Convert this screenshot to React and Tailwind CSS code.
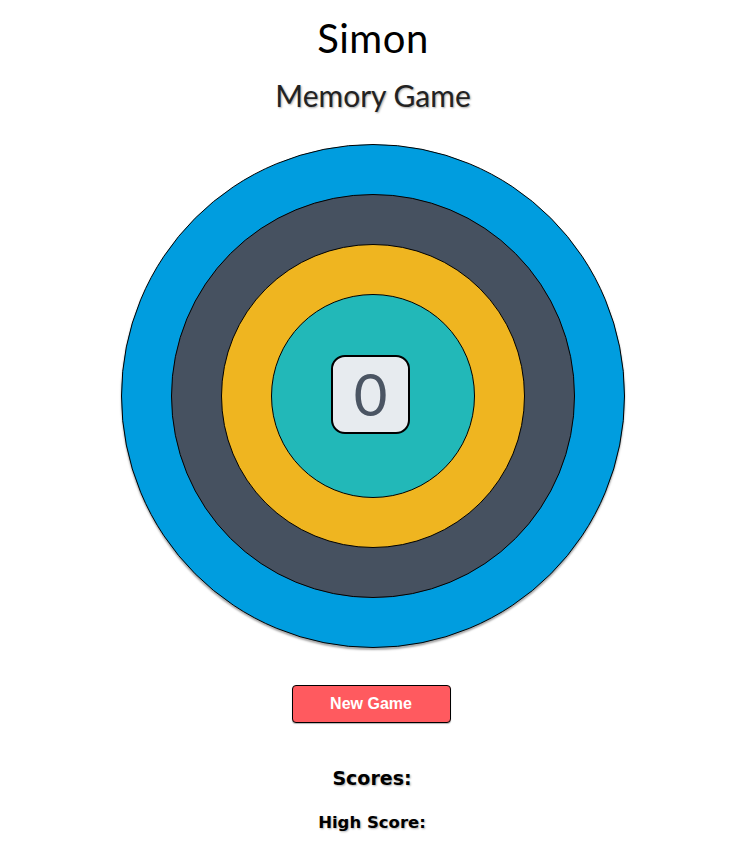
export default function App() {
  return (
    <div className="flex flex-col items-center bg-white min-h-screen pl-[9px] font-['Lato',sans-serif] text-black">
      <h1 className="mt-[14px] text-[40px] leading-[48px] font-normal tracking-[0.5px]">Simon</h1>
      <h2 className="mt-[15px] text-[30px] leading-[36px] text-[#222] [text-shadow:1px_1px_2px_rgba(0,0,0,0.35)]">Memory Game</h2>

      <div className="mt-[31px] w-[504px] h-[504px] rounded-full bg-[#009ddf] border-[1.5px] border-black shadow-[0_2px_2px_rgba(0,0,0,0.35)] flex items-center justify-center">
        <div className="w-[404px] h-[404px] rounded-full bg-[#465160] border-[1.5px] border-black flex items-center justify-center">
          <div className="w-[304px] h-[304px] rounded-full bg-[#efb520] border-[1.5px] border-black flex items-center justify-center">
            <div className="w-[204px] h-[204px] rounded-full bg-[#22b8b8] border-[1.5px] border-black flex items-center justify-center">
              <div className="mr-[5px] mb-[4px] w-[79px] h-[79px] rounded-[14px] bg-[#e7ebef] border-2 border-black flex items-center justify-center">
                <span className="text-[58px] leading-none font-normal text-[#4b5563] font-['Lato',sans-serif]">0</span>
              </div>
            </div>
          </div>
        </div>
      </div>

      <button className="mt-[37px] mr-[4px] w-[159px] h-[38px] bg-[#ff5a5f] border border-black rounded-[4px] text-white font-bold text-[16px] font-['Liberation_Sans',Arial,sans-serif] shadow-[0_1px_1px_rgba(0,0,0,0.3)]">
        New Game
      </button>

      <div className="mt-[42px] mr-[2px] text-[19px] font-bold leading-[26px] font-['DejaVu_Sans',sans-serif] [text-shadow:1px_1px_2px_rgba(0,0,0,0.3)]">Scores:</div>
      <div className="mt-[21px] mr-[2px] text-[16.5px] font-bold leading-[22px] font-['DejaVu_Sans',sans-serif] [text-shadow:1px_1px_2px_rgba(0,0,0,0.3)]">High Score:</div>
    </div>
  );
}
